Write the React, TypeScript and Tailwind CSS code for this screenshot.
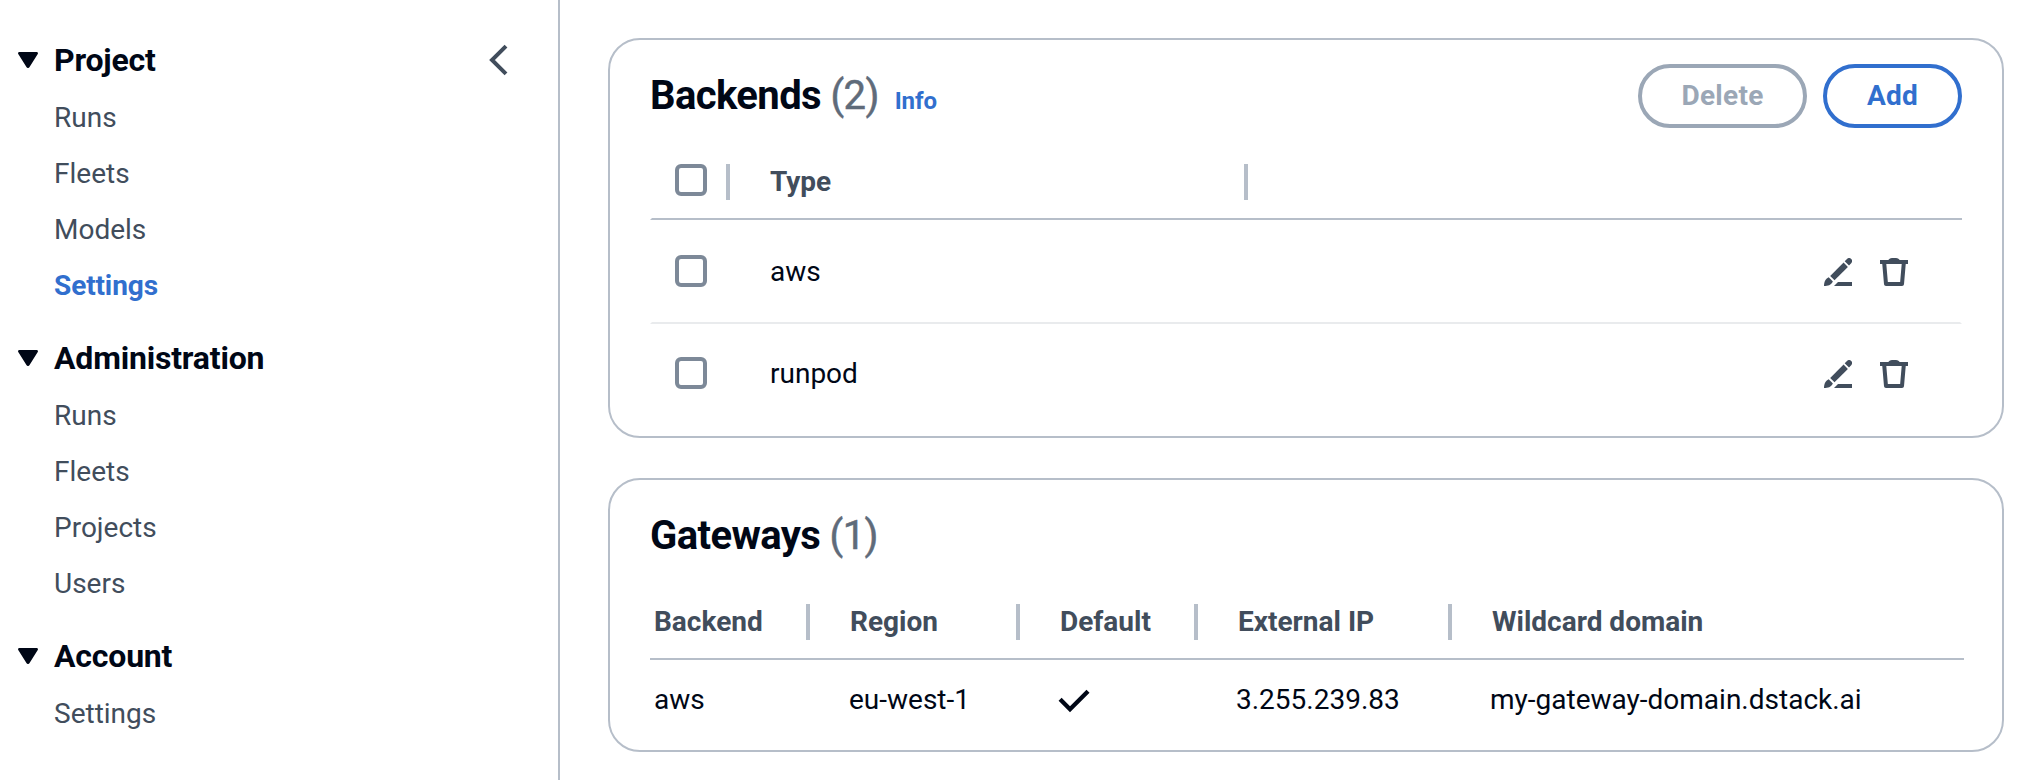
import React from 'react';

type IconProps = { className?: string };

function CaretDown({ className = '' }: IconProps) {
  return (
    <svg viewBox="0 0 20 16" className={className} fill="currentColor">
      <path d="M1.4 0h17.2c1.2 0 1.8 1.3 1 2.3l-8.2 12.9c-.7 1.1-2.1 1.1-2.8 0L.4 2.3C-.4 1.3.2 0 1.4 0Z" />
    </svg>
  );
}

function ChevronLeft({ className = '' }: IconProps) {
  return (
    <svg viewBox="0 0 32 32" className={className} fill="none" stroke="currentColor" strokeWidth="4">
      <path d="M26 2.100 12 16l14 13.900" />
    </svg>
  );
}

function EditIcon() {
  return (
    <svg viewBox="0 0 28 28" className="h-7 w-7" fill="currentColor">
      <path d="M14 24h14v4H10Z" />
      <path d="M19.6 4.600 23.900 8.900 10.500 22.200 6.200 17.900Z" />
      <path d="M20.700 3.300 23 1a3 3 0 0 1 4.200 0 3 3 0 0 1 0 4.200L25 7.500Z" />
      <path d="M4.700 19.300 8.900 23.500C7 27.200 4 28 0 28c0-4 1.200-7 4.700-8.700Z" />
    </svg>
  );
}

function TrashIcon() {
  return (
    <svg viewBox="0 0 28 28" className="h-7 w-7" fill="none" stroke="currentColor" strokeWidth="4">
      <path d="M0 4h28" />
      <path d="M8 2.500C9 1 10 0 12 0h4c2 0 3 1 4 2.500Z" fill="currentColor" stroke="none" />
      <path d="M4.200 5 6 26h16l1.800-21" strokeLinejoin="round" />
    </svg>
  );
}

function CheckIcon() {
  return (
    <svg viewBox="0 0 32 32" className="-ml-0.5 h-8 w-8" fill="none" stroke="currentColor" strokeWidth="4.300">
      <path d="M2.100 15.300 12 25.200 30 7.200" />
    </svg>
  );
}

function Checkbox() {
  return <span className="block h-8 w-8 rounded-[6px] border-4 border-[#7d8998] bg-white" />;
}

function Divider() {
  return <span className="block h-9 w-1 bg-[#b6bec9]" />;
}

const sections = [
  { title: 'Project', items: ['Runs', 'Fleets', 'Models', 'Settings'], active: 'Settings' },
  { title: 'Administration', items: ['Runs', 'Fleets', 'Projects', 'Users'], active: '' },
  { title: 'Account', items: ['Settings'], active: '' },
];

function Sidebar() {
  return (
    <nav className="flex h-full w-[560px] shrink-0 justify-between border-r-2 border-[#b6bec9] pt-[40px] pl-[18px] pr-[46px]">
      <div className="flex flex-col gap-8">
        {sections.map((section) => (
          <section key={section.title}>
            <h3 className="flex h-10 items-center gap-4 text-[32px] leading-10 font-bold tracking-[-0.006em] text-[#000716]">
              <CaretDown className="h-4 w-5" />
              {section.title}
            </h3>
            <ul className="flex flex-col gap-4 pt-[18px] pl-9">
              {section.items.map((item) => (
                <li
                  key={item}
                  className={
                    item === section.active
                      ? 'h-10 text-[28px] leading-10 font-bold tracking-[-0.004em] text-[#316fce]'
                      : 'h-10 text-[28px] leading-10 text-[#414d5c]'
                  }
                >
                  {item}
                </li>
              ))}
            </ul>
          </section>
        ))}
      </div>
      <button className="mt-1 h-8 w-8 text-[#414d5c]">
        <ChevronLeft className="h-8 w-8" />
      </button>
    </nav>
  );
}

function Heading({ title, count }: { title: string; count: number }) {
  return (
    <h2 className="text-[40px] leading-[48px] font-bold tracking-[-0.015em] text-[#000716]">
      {title}{' '}
      <span className="font-normal text-[#5f6b7a] [-webkit-text-stroke:0.5px_#5f6b7a]">({count})</span>
    </h2>
  );
}

function BackendsCard() {
  return (
    <section className="h-[400px] rounded-[32px] border-2 border-[#b6bec9] bg-white px-10 pt-6">
      <header className="flex h-16 items-start justify-between">
        <div className="flex items-baseline gap-4 pt-2">
          <Heading title="Backends" count={2} />
          <a className="text-[24px] leading-8 font-bold tracking-[-0.005em] text-[#316fce]">Info</a>
        </div>
        <div className="flex gap-4">
          <button className="h-16 w-[169px] rounded-full border-4 border-[#9ba7b6] text-[28px] font-bold tracking-[0.01em] text-[#9ba7b6]">
            Delete
          </button>
          <button className="h-16 w-[139px] rounded-full border-4 border-[#316fce] text-[28px] font-bold tracking-[0.01em] text-[#316fce]">
            Add
          </button>
        </div>
      </header>
      <div className="mt-4 flex h-[76px] items-start border-b-2 border-l-2 border-b-[#b6bec9] border-l-transparent pt-5 pl-[23px] text-[28px] leading-9 font-bold text-[#414d5c]">
        <Checkbox />
        <div className="ml-[19px] flex w-[518px] justify-between">
          <Divider />
          <span className="w-[474px]">Type</span>
        </div>
        <Divider />
      </div>
      {['aws', 'runpod'].map((name, i) => (
        <div
          key={name}
          className={
            i === 0
              ? 'flex h-[104px] items-center border-x-2 border-b-2 border-x-transparent border-b-[#e9ebed] pt-0.5 pr-[52px] pl-[23px] text-[28px] text-[#000716]'
              : 'flex h-[100px] items-center pr-[54px] pl-[25px] text-[28px] text-[#000716]'
          }
        >
          <div className="pb-0.5">
            <Checkbox />
          </div>
          <span className="ml-[63px] grow leading-10">{name}</span>
          <div className="flex gap-7 text-[#414d5c]">
            <EditIcon />
            <TrashIcon />
          </div>
        </div>
      ))}
    </section>
  );
}

const columns = ['Backend', 'Region', 'Default', 'External IP', 'Wildcard domain'];
const gatewayGrid = 'grid grid-cols-[196px_210px_178px_254px_1fr]';

function GatewaysCard() {
  return (
    <section className="h-[274px] rounded-[32px] border-2 border-[#b6bec9] bg-white pt-8 pr-[38px] pl-10">
      <Heading title="Gateways" count={1} />
      <div className="mt-6 h-[76px] border-b-2 border-[#b6bec9] pt-5 pl-1">
        <div className={gatewayGrid}>
          {columns.map((column, i) => (
            <div
              key={column}
              className="flex justify-between pr-[40px] text-[28px] leading-9 font-bold text-[#414d5c]"
            >
              {column}
              {i < columns.length - 1 && <Divider />}
            </div>
          ))}
        </div>
      </div>
      <div className="pt-5 pl-1">
        <div className={gatewayGrid + ' text-[28px] leading-10 text-[#000716]'}>
          <span>aws</span>
          <span className="-ml-px">eu-west-1</span>
          <span className="flex items-center">
            <CheckIcon />
          </span>
          <span className="-ml-0.5">3.255.239.83</span>
          <span className="-ml-0.5">my-gateway-domain.dstack.ai</span>
        </div>
      </div>
    </section>
  );
}

export default function App() {
  return (
    <div className="flex h-[780px] w-[2040px] overflow-hidden bg-white font-['Roboto',sans-serif]">
      <Sidebar />
      <main className="flex grow flex-col gap-10 pt-[38px] pr-9 pl-12">
        <BackendsCard />
        <GatewaysCard />
      </main>
    </div>
  );
}
